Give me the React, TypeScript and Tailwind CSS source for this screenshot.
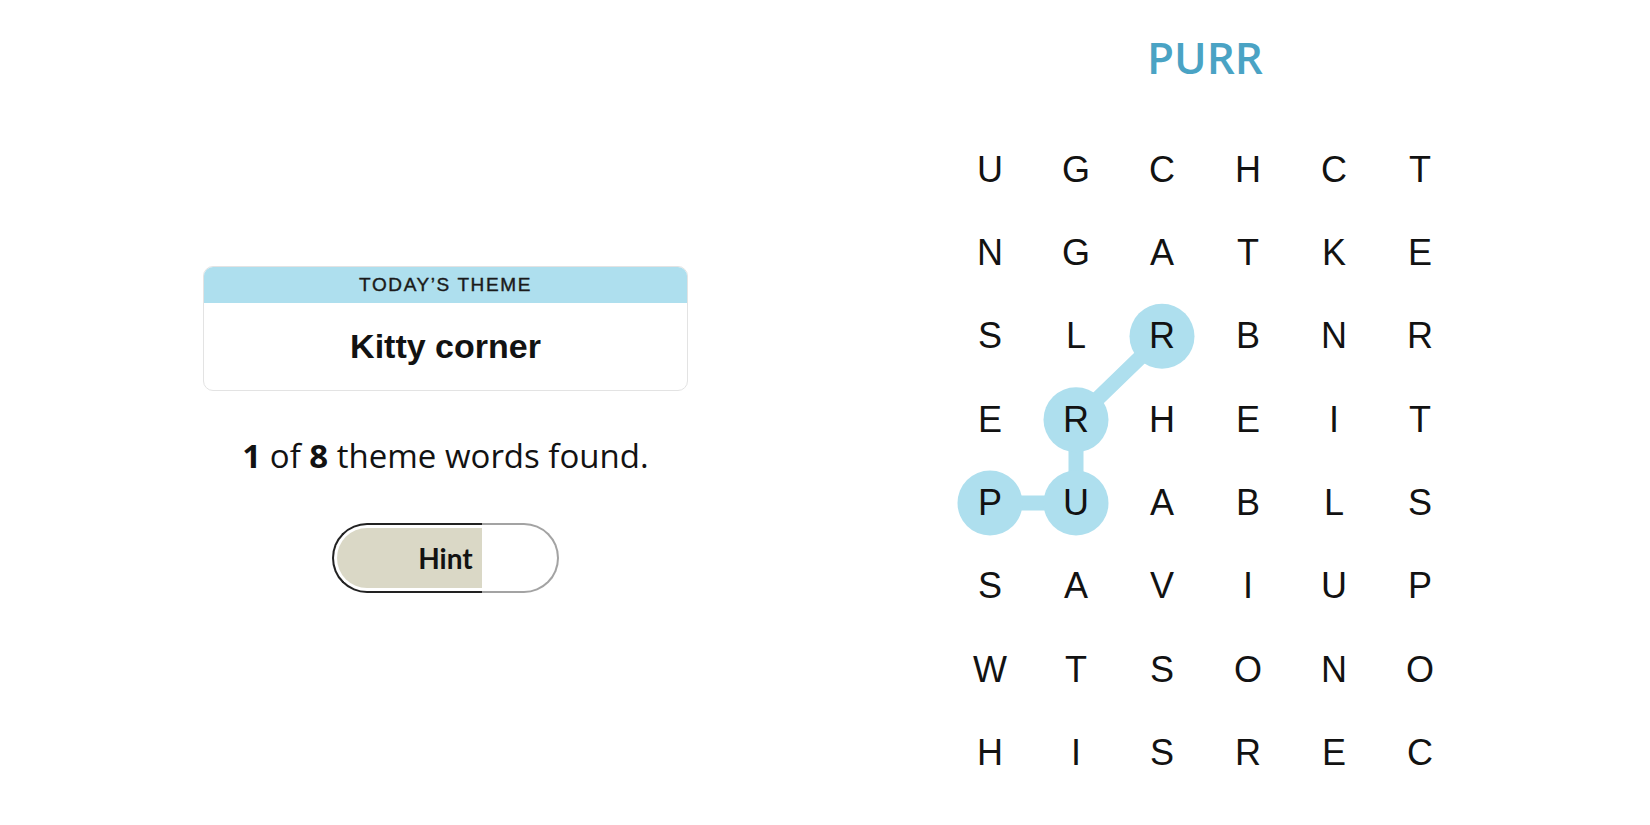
const LETTERS = [
  "UGCHCT",
  "NGATKE",
  "SLRBNR",
  "ERHEIT",
  "PUABLS",
  "SAVIUP",
  "WTSONO",
  "HISREC",
];

// path of the word being traced: [row, col]
const PATH: [number, number][] = [
  [4, 0],
  [4, 1],
  [3, 1],
  [2, 2],
];

const COL_W = 86;
const ROW_H = 83.33;

function center([r, c]: [number, number]) {
  return { x: c * COL_W + COL_W / 2, y: r * ROW_H + ROW_H / 2 };
}

function ThemeCard() {
  return (
    <div className="w-[485px] rounded-[10px] border border-[#e3e3e3] overflow-hidden bg-white">
      <div className="h-[36px] bg-[#aedfee] flex items-center justify-center">
        <span className="font-['Liberation_Sans',sans-serif] text-[19px] tracking-[1.6px] text-[#1a1a1a] [-webkit-text-stroke:0.4px_#1a1a1a]">
          TODAY’S THEME
        </span>
      </div>
      <div className="h-[87px] flex items-center justify-center">
        <span className="font-['Liberation_Sans',sans-serif] font-bold text-[34px] text-[#121212]">
          Kitty corner
        </span>
      </div>
    </div>
  );
}

function HintButton() {
  return (
    <div className="relative w-[227px] h-[70px] flex">
      <div className="w-[150px] h-full rounded-l-full border-2 border-r-0 border-[#222] bg-white p-[3px] pr-0">
        <div className="w-full h-full rounded-l-full bg-[#dad8c6]" />
      </div>
      <div className="flex-1 h-full rounded-r-full border-2 border-l-0 border-[#a3a3a3] bg-white" />
      <div className="absolute inset-0 flex items-center justify-center">
        <span className="font-['Lato',sans-serif] font-bold text-[28px] text-[#121212]">Hint</span>
      </div>
    </div>
  );
}

function Board() {
  const pts = PATH.map(center);
  return (
    <div className="relative w-[516px]">
      <svg className="absolute inset-0" width={516} height={8 * ROW_H}>
        <polyline
          points={pts.map((p) => `${p.x},${p.y}`).join(" ")}
          fill="none"
          stroke="#aedfee"
          strokeWidth={15}
        />
        {pts.map((p, i) => (
          <circle key={i} cx={p.x} cy={p.y} r={32.5} fill="#aedfee" />
        ))}
      </svg>
      <div className="relative grid grid-cols-[repeat(6,86px)] auto-rows-[83.33px]">
        {LETTERS.flatMap((row, r) =>
          row.split("").map((ch, c) => (
            <div
              key={`${r}-${c}`}
              className="flex items-center justify-center font-['Liberation_Sans',sans-serif] text-[36px] text-[#121212]"
            >
              {ch}
            </div>
          ))
        )}
      </div>
    </div>
  );
}

export default function App() {
  return (
    <div className="w-[1650px] h-[825px] bg-white flex overflow-hidden">
      <div className="w-[891px] flex flex-col items-center pt-[266px]">
        <ThemeCard />
        <p className="mt-[42px] leading-[46px] font-['Open_Sans',sans-serif] text-[33px] text-[#121212]">
          <b className="font-bold">1</b> of <b className="font-bold">8</b> theme words found.
        </p>
        <div className="mt-[44px]">
          <HintButton />
        </div>
      </div>
      <div className="ml-[56px] w-[516px] flex flex-col items-center pt-[31px]">
        <h1 className="h-[52px] leading-[52px] font-['Open_Sans',sans-serif] font-semibold text-[44px] text-[#4aa3c4]">
          PURR
        </h1>
        <div className="mt-[45px]">
          <Board />
        </div>
      </div>
    </div>
  );
}
